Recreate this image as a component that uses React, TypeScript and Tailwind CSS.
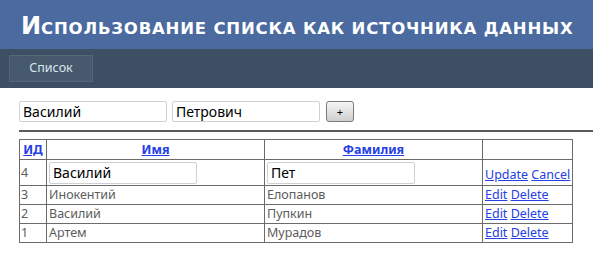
import React from "react";

const rows = [
  { id: 3, first: "Инокентий", last: "Елопанов" },
  { id: 2, first: "Василий", last: "Пупкин" },
  { id: 1, first: "Артем", last: "Мурадов" },
];

export default function App() {
  const cell = "border border-[#6b6b6b] px-[2px] py-0 align-middle";
  const link = "text-[#2440e6] underline";
  return (
    <div className="w-[593px] h-[259px] bg-white overflow-hidden font-['Noto_Sans',sans-serif]">
      <header className="h-[49px] bg-[#4a6aa0] flex items-center pl-[21px]">
        <h1 className="leading-none font-bold text-white whitespace-nowrap pt-[3px] font-['DejaVu_Sans',sans-serif]">
          <span className="text-[24px]">И</span>
          <span className="text-[16.5px] uppercase tracking-[0.8px]">спользование списка как источника данных</span>
        </h1>
      </header>
      <nav className="h-[39px] bg-[#3c4f63] pl-[9px] pt-[6px]">
        <div className="w-[84px] h-[27px] border border-[#53667a] bg-[#46596d] text-[#dde5ee] text-[12.5px] flex items-center justify-center">
          Список
        </div>
      </nav>
      <main className="pl-[19px] pt-[13px]">
        <div className="flex items-center">
          <input
            defaultValue="Василий"
            className="w-[148px] h-[21px] border border-[#cfcfd4] rounded-[2px] px-[3px] text-[14px] text-black outline-none"
          />
          <input
            defaultValue="Петрович"
            className="ml-[5px] w-[148px] h-[21px] border border-[#cfcfd4] rounded-[2px] px-[3px] text-[14px] text-black outline-none"
          />
          <button className="ml-[6px] w-[28px] h-[21px] border border-[#7a7a7a] rounded-[3px] bg-gradient-to-b from-[#f6f6f6] to-[#cfcfcf] text-[11px] leading-none text-black flex items-center justify-center">
            +
          </button>
        </div>
        <div className="mt-[8px] h-[2px] bg-[#5a5a5a]" />
        <table className="mt-[7px] border-collapse text-[12.5px] text-[#5c5c5c] leading-tight">
          <tbody>
            <tr className="h-[20px]">
              <th className={`${cell} w-[27px] text-center`}>
                <a className={`${link} font-bold`}>ИД</a>
              </th>
              <th className={`${cell} w-[218px] text-center`}>
                <a className={`${link} font-bold`}>Имя</a>
              </th>
              <th className={`${cell} w-[218px] text-center`}>
                <a className={`${link} font-bold`}>Фамилия</a>
              </th>
              <th className={`${cell} w-[88px]`}></th>
            </tr>
            <tr className="h-[26px]">
              <td className={`${cell} pl-[1px]`}>4</td>
              <td className={cell}>
                <input
                  defaultValue="Василий"
                  className="w-[148px] h-[22px] border border-[#cfcfd4] rounded-[2px] px-[3px] text-[14px] text-black outline-none"
                />
              </td>
              <td className={cell}>
                <input
                  defaultValue="Пет"
                  className="w-[148px] h-[22px] border border-[#cfcfd4] rounded-[2px] px-[3px] text-[14px] text-black outline-none"
                />
              </td>
              <td className={`${cell} whitespace-nowrap pt-[4px]`}>
                <a className={link}>Update</a> <a className={link}>Cancel</a>
              </td>
            </tr>
            {rows.map((r) => (
              <tr key={r.id} className="h-[19px]">
                <td className={`${cell} pl-[1px]`}>{r.id}</td>
                <td className={cell}>{r.first}</td>
                <td className={cell}>{r.last}</td>
                <td className={`${cell} whitespace-nowrap`}>
                  <a className={link}>Edit</a> <a className={link}>Delete</a>
                </td>
              </tr>
            ))}
          </tbody>
        </table>
      </main>
    </div>
  );
}
